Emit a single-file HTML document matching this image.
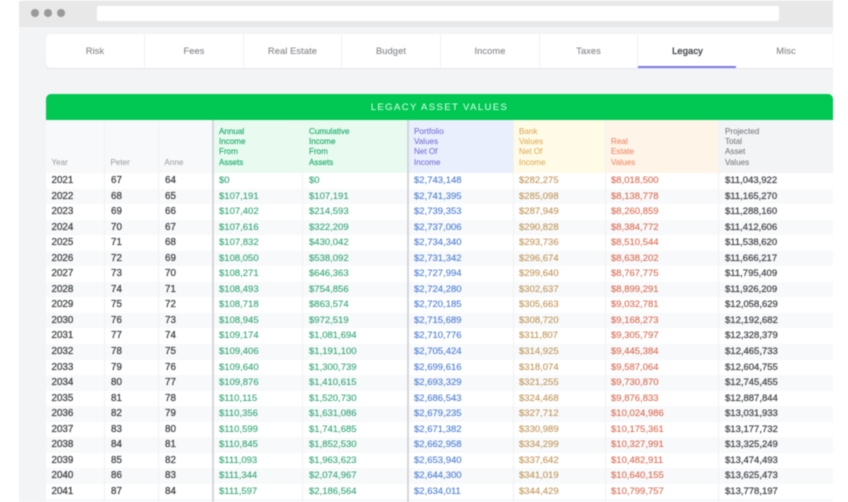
<!DOCTYPE html>
<html><head><meta charset="utf-8"><style>
html,body{margin:0;padding:0;background:#fff;width:848px;height:502px;overflow:hidden}
*{box-sizing:border-box}
body{font-family:"Liberation Sans",sans-serif}
#wrap{position:absolute;left:0;top:0;width:848px;height:502px;overflow:hidden;filter:blur(.4px)}
#frame{position:absolute;left:19px;top:0;width:814px;height:502px;background:#f3f4f6;overflow:hidden;border-top-left-radius:6px}
#bar{position:absolute;left:19px;top:1px;width:814px;height:26px;background:#e8e8e8}
.dot{position:absolute;top:9px;width:8px;height:8px;border-radius:50%;background:#999}
#url{position:absolute;left:97px;top:6px;width:682px;height:15px;background:#fff;border-radius:2px}
#tabs{position:absolute;left:46px;top:34px;width:787px;height:34px;background:#fff;border-radius:5px 0 0 5px;box-shadow:0 1px 1px #e4e6ea;display:flex}
#tabs div{height:34px;line-height:34px;text-align:center;font-size:9.3px;color:#85878c;border-right:1px solid #eef0f2;letter-spacing:.1px;-webkit-text-stroke:.1px currentColor}
#tabs div.a{color:#3f4248;border-bottom:2px solid #7b7be6;border-right:none;font-size:9.4px;-webkit-text-stroke:.3px currentColor;padding-left:1px}
#green{position:absolute;left:46px;top:94px;width:787px;height:26px;background:#00c853;border-radius:5px 5px 0 0;color:#e8fff2;text-align:center;font-size:9.5px;line-height:27px;letter-spacing:1.4px}
#tbl{position:absolute;left:46px;top:120px;width:787px;height:382px;background:#fff}
.row{display:grid;grid-template-columns:59px 54px 55px 89px 106px 105px 92px 113px 114px;height:15.55px}
.row.e{background:#f7f9fa}
.row span{font-size:9.5px;line-height:15.55px;padding-left:5.5px;border-right:1px solid #f0f2f4;white-space:nowrap;-webkit-text-stroke:.12px currentColor}
.row span:nth-child(1),.row span:nth-child(2),.row span:nth-child(3){color:#45484d;font-size:9.8px;-webkit-text-stroke:.3px currentColor}
.row span:nth-child(2),.row span:nth-child(3){padding-left:6px}
.row span:nth-child(3){border-right:2px solid #d4d7db}
.row span:nth-child(4),.row span:nth-child(5){color:#35a878;padding-left:5px}
.row span:nth-child(5){border-right:2px solid #d4d7db;padding-left:6px}
.row span:nth-child(6){color:#4d7fd6;padding-left:5px}
.row span:nth-child(7){color:#c2975a;padding-left:5px}
.row span:nth-child(8){color:#dc6e55;padding-left:5px}
.row span:nth-child(9){color:#4c4f55;padding-left:6px;border-right:none;-webkit-text-stroke:.3px currentColor}
#head{display:grid;grid-template-columns:59px 54px 55px 89px 106px 105px 92px 113px 114px;height:53px}
#head div{font-size:8.1px;line-height:10.35px;padding:5.5px 0 5px 5.5px;display:flex;flex-direction:column;justify-content:flex-end;border-right:1px solid #f0f2f4;background:#f8f9fa;color:#95989e}
#head .g{background:#e9fbf1;color:#1fae6c;-webkit-text-stroke:.15px currentColor;padding-left:5px}
#head .l{border-right:2px solid #d4d7db}
#head .g.l{padding-left:6px}
#head .b{background:#e9effc;color:#6a62d8;padding-left:5px}
#head .y{background:#fffbe6;color:#dca54a;padding-left:5px}
#head .o{background:#fff4e8;color:#ee7a55;padding-left:5px}
#head .k{background:#f3f4f6;color:#6a6d73;border-right:none;padding-left:6px}
</style></head><body>
<div id="wrap">
<div id="frame"></div>
<div id="bar"></div>
<div class="dot" style="left:31px"></div><div class="dot" style="left:44px"></div><div class="dot" style="left:57px"></div>
<div id="url"></div>
<div id="tabs">
<div style="width:99px">Risk</div><div style="width:99px">Fees</div><div style="width:98px">Real Estate</div><div style="width:99px">Budget</div><div style="width:99px">Income</div><div style="width:98px">Taxes</div><div class="a" style="width:98px">Legacy</div><div style="width:97px;border:none;padding-left:3px">Misc</div>
</div>
<div id="green">LEGACY ASSET VALUES</div>
<div id="tbl">
<div id="head">
<div>Year</div><div>Peter</div><div class="l">Anne</div>
<div class="g">Annual<br>Income<br>From<br>Assets</div>
<div class="g l">Cumulative<br>Income<br>From<br>Assets</div>
<div class="b">Portfolio<br>Values<br>Net Of<br>Income</div>
<div class="y">Bank<br>Values<br>Net Of<br>Income</div>
<div class="o">Real<br>Estate<br>Values</div>
<div class="k">Projected<br>Total<br>Asset<br>Values</div>
</div>
<div class="row"><span>2021</span><span>67</span><span>64</span><span>$0</span><span>$0</span><span>$2,743,148</span><span>$282,275</span><span>$8,018,500</span><span>$11,043,922</span></div>
<div class="row e"><span>2022</span><span>68</span><span>65</span><span>$107,191</span><span>$107,191</span><span>$2,741,395</span><span>$285,098</span><span>$8,138,778</span><span>$11,165,270</span></div>
<div class="row"><span>2023</span><span>69</span><span>66</span><span>$107,402</span><span>$214,593</span><span>$2,739,353</span><span>$287,949</span><span>$8,260,859</span><span>$11,288,160</span></div>
<div class="row e"><span>2024</span><span>70</span><span>67</span><span>$107,616</span><span>$322,209</span><span>$2,737,006</span><span>$290,828</span><span>$8,384,772</span><span>$11,412,606</span></div>
<div class="row"><span>2025</span><span>71</span><span>68</span><span>$107,832</span><span>$430,042</span><span>$2,734,340</span><span>$293,736</span><span>$8,510,544</span><span>$11,538,620</span></div>
<div class="row e"><span>2026</span><span>72</span><span>69</span><span>$108,050</span><span>$538,092</span><span>$2,731,342</span><span>$296,674</span><span>$8,638,202</span><span>$11,666,217</span></div>
<div class="row"><span>2027</span><span>73</span><span>70</span><span>$108,271</span><span>$646,363</span><span>$2,727,994</span><span>$299,640</span><span>$8,767,775</span><span>$11,795,409</span></div>
<div class="row e"><span>2028</span><span>74</span><span>71</span><span>$108,493</span><span>$754,856</span><span>$2,724,280</span><span>$302,637</span><span>$8,899,291</span><span>$11,926,209</span></div>
<div class="row"><span>2029</span><span>75</span><span>72</span><span>$108,718</span><span>$863,574</span><span>$2,720,185</span><span>$305,663</span><span>$9,032,781</span><span>$12,058,629</span></div>
<div class="row e"><span>2030</span><span>76</span><span>73</span><span>$108,945</span><span>$972,519</span><span>$2,715,689</span><span>$308,720</span><span>$9,168,273</span><span>$12,192,682</span></div>
<div class="row"><span>2031</span><span>77</span><span>74</span><span>$109,174</span><span>$1,081,694</span><span>$2,710,776</span><span>$311,807</span><span>$9,305,797</span><span>$12,328,379</span></div>
<div class="row e"><span>2032</span><span>78</span><span>75</span><span>$109,406</span><span>$1,191,100</span><span>$2,705,424</span><span>$314,925</span><span>$9,445,384</span><span>$12,465,733</span></div>
<div class="row"><span>2033</span><span>79</span><span>76</span><span>$109,640</span><span>$1,300,739</span><span>$2,699,616</span><span>$318,074</span><span>$9,587,064</span><span>$12,604,755</span></div>
<div class="row e"><span>2034</span><span>80</span><span>77</span><span>$109,876</span><span>$1,410,615</span><span>$2,693,329</span><span>$321,255</span><span>$9,730,870</span><span>$12,745,455</span></div>
<div class="row"><span>2035</span><span>81</span><span>78</span><span>$110,115</span><span>$1,520,730</span><span>$2,686,543</span><span>$324,468</span><span>$9,876,833</span><span>$12,887,844</span></div>
<div class="row e"><span>2036</span><span>82</span><span>79</span><span>$110,356</span><span>$1,631,086</span><span>$2,679,235</span><span>$327,712</span><span>$10,024,986</span><span>$13,031,933</span></div>
<div class="row"><span>2037</span><span>83</span><span>80</span><span>$110,599</span><span>$1,741,685</span><span>$2,671,382</span><span>$330,989</span><span>$10,175,361</span><span>$13,177,732</span></div>
<div class="row e"><span>2038</span><span>84</span><span>81</span><span>$110,845</span><span>$1,852,530</span><span>$2,662,958</span><span>$334,299</span><span>$10,327,991</span><span>$13,325,249</span></div>
<div class="row"><span>2039</span><span>85</span><span>82</span><span>$111,093</span><span>$1,963,623</span><span>$2,653,940</span><span>$337,642</span><span>$10,482,911</span><span>$13,474,493</span></div>
<div class="row e"><span>2040</span><span>86</span><span>83</span><span>$111,344</span><span>$2,074,967</span><span>$2,644,300</span><span>$341,019</span><span>$10,640,155</span><span>$13,625,473</span></div>
<div class="row"><span>2041</span><span>87</span><span>84</span><span>$111,597</span><span>$2,186,564</span><span>$2,634,011</span><span>$344,429</span><span>$10,799,757</span><span>$13,778,197</span></div>
<div class="row e" style="height:4px"><span></span><span></span><span></span><span></span><span></span><span></span><span></span><span></span><span></span></div>
</div>
</div>
</body></html>
